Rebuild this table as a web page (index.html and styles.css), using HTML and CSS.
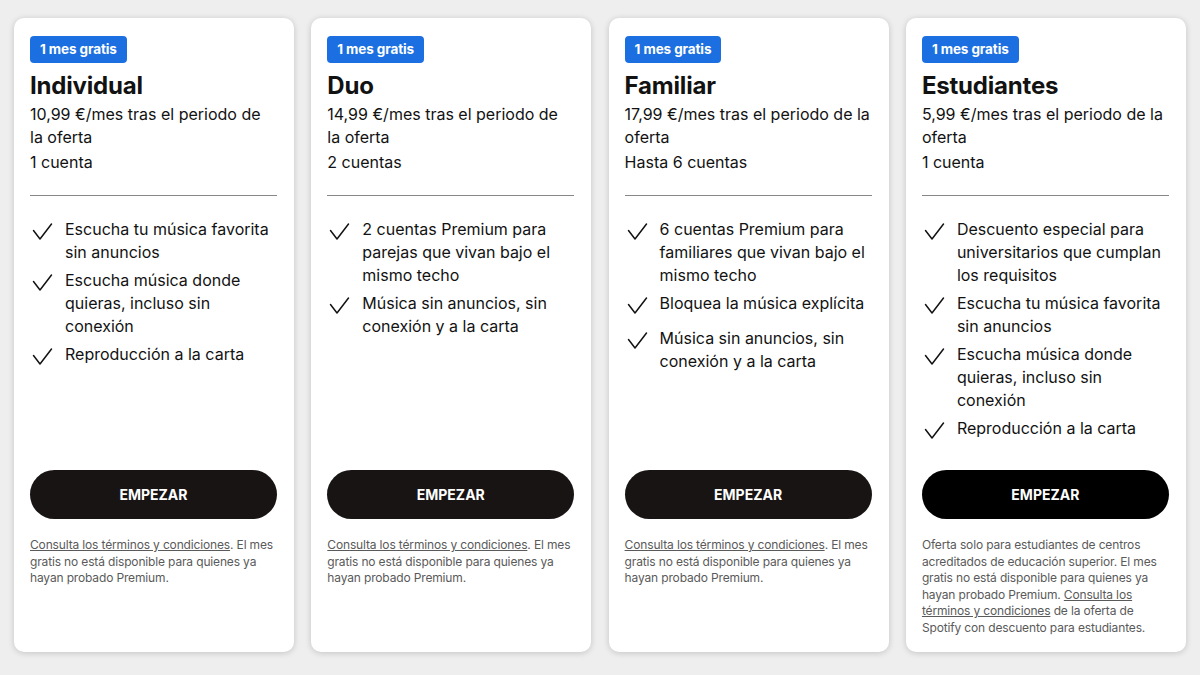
FILE: index.html
```html
<!DOCTYPE html>
<html lang="es">
<head>
<meta charset="utf-8">
<title>Planes Premium</title>
<link rel="stylesheet" href="styles.css">
</head>
<body>
<main class="plans">
  <section class="card">
    <span class="badge">1 mes gratis</span>
    <h2 class="title">Individual</h2>
    <p class="price">10,99 €/mes tras el periodo de la oferta</p>
    <p class="accounts">1 cuenta</p>
    <hr class="divider">
    <ul class="features">
      <li class="feature"><svg class="check" viewBox="0 0 24 24"><path d="M3.5 12.5 L10 21 L21.5 6"/></svg><span>Escucha tu música favorita sin anuncios</span></li>
      <li class="feature"><svg class="check" viewBox="0 0 24 24"><path d="M3.5 12.5 L10 21 L21.5 6"/></svg><span>Escucha música donde quieras, incluso sin conexión</span></li>
      <li class="feature"><svg class="check" viewBox="0 0 24 24"><path d="M3.5 12.5 L10 21 L21.5 6"/></svg><span>Reproducción a la carta</span></li>
    </ul>
    <button class="cta">EMPEZAR</button>
    <p class="fine"><a class="link" href="#">Consulta los términos y condiciones</a>. El mes gratis no está disponible para quienes ya hayan probado Premium.</p>
  </section>

  <section class="card">
    <span class="badge">1 mes gratis</span>
    <h2 class="title">Duo</h2>
    <p class="price">14,99 €/mes tras el periodo de la oferta</p>
    <p class="accounts">2 cuentas</p>
    <hr class="divider">
    <ul class="features">
      <li class="feature"><svg class="check" viewBox="0 0 24 24"><path d="M3.5 12.5 L10 21 L21.5 6"/></svg><span>2 cuentas Premium para parejas que vivan bajo el mismo techo</span></li>
      <li class="feature"><svg class="check" viewBox="0 0 24 24"><path d="M3.5 12.5 L10 21 L21.5 6"/></svg><span>Música sin anuncios, sin conexión y a la carta</span></li>
    </ul>
    <button class="cta">EMPEZAR</button>
    <p class="fine"><a class="link" href="#">Consulta los términos y condiciones</a>. El mes gratis no está disponible para quienes ya hayan probado Premium.</p>
  </section>

  <section class="card">
    <span class="badge">1 mes gratis</span>
    <h2 class="title">Familiar</h2>
    <p class="price">17,99 €/mes tras el periodo de la oferta</p>
    <p class="accounts">Hasta 6 cuentas</p>
    <hr class="divider">
    <ul class="features">
      <li class="feature"><svg class="check" viewBox="0 0 24 24"><path d="M3.5 12.5 L10 21 L21.5 6"/></svg><span>6 cuentas Premium para familiares que vivan bajo el mismo techo</span></li>
      <li class="feature"><svg class="check" viewBox="0 0 24 24"><path d="M3.5 12.5 L10 21 L21.5 6"/></svg><span>Bloquea la música explícita</span></li>
      <li class="feature"><svg class="check" viewBox="0 0 24 24"><path d="M3.5 12.5 L10 21 L21.5 6"/></svg><span>Música sin anuncios, sin conexión y a la carta</span></li>
    </ul>
    <button class="cta">EMPEZAR</button>
    <p class="fine"><a class="link" href="#">Consulta los términos y condiciones</a>. El mes gratis no está disponible para quienes ya hayan probado Premium.</p>
  </section>

  <section class="card">
    <span class="badge">1 mes gratis</span>
    <h2 class="title">Estudiantes</h2>
    <p class="price">5,99 €/mes tras el periodo de la oferta</p>
    <p class="accounts">1 cuenta</p>
    <hr class="divider">
    <ul class="features">
      <li class="feature"><svg class="check" viewBox="0 0 24 24"><path d="M3.5 12.5 L10 21 L21.5 6"/></svg><span>Descuento especial para universitarios que cumplan los requisitos</span></li>
      <li class="feature"><svg class="check" viewBox="0 0 24 24"><path d="M3.5 12.5 L10 21 L21.5 6"/></svg><span>Escucha tu música favorita sin anuncios</span></li>
      <li class="feature"><svg class="check" viewBox="0 0 24 24"><path d="M3.5 12.5 L10 21 L21.5 6"/></svg><span>Escucha música donde quieras, incluso sin conexión</span></li>
      <li class="feature"><svg class="check" viewBox="0 0 24 24"><path d="M3.5 12.5 L10 21 L21.5 6"/></svg><span>Reproducción a la carta</span></li>
    </ul>
    <button class="cta cta-black">EMPEZAR</button>
    <p class="fine">Oferta solo para estudiantes de centros acreditados de educación superior. El mes gratis no está disponible para quienes ya hayan probado Premium. <a class="link" href="#">Consulta los términos y condiciones</a> de la oferta de Spotify con descuento para estudiantes.</p>
  </section>
</main>
</body>
</html>
```

FILE: styles.css
```css
* { box-sizing: border-box; }

html, body {
  margin: 0;
  padding: 0;
  background: #eeeeee;
  width: 1200px;
  height: 675px;
  overflow: hidden;
}

body {
  font-family: "Inter", "Noto Sans", sans-serif;
  color: #121212;
}

.plans {
  display: grid;
  grid-template-columns: repeat(4, 280px);
  column-gap: 17.3px;
  padding: 18px 14px 0 14px;
  height: 652px;
}

.card {
  background: #ffffff;
  border-radius: 10px;
  box-shadow: 0 1px 6px rgba(0, 0, 0, 0.18);
  padding: 18px 17px 16px 16px;
  display: flex;
  flex-direction: column;
  align-items: flex-start;
}

.badge {
  display: inline-block;
  background: #1b6fe0;
  color: #ffffff;
  font-weight: 700;
  font-size: 13.5px;
  line-height: 27px;
  height: 27px;
  padding: 0 10px;
  border-radius: 4px;
  letter-spacing: -0.1px;
}

.title {
  margin: 8px 0 0 0;
  font-size: 24px;
  line-height: 30px;
  font-weight: 700;
  letter-spacing: -0.2px;
}

.price,
.accounts {
  margin: 2px 0 0 0;
  font-size: 16px;
  line-height: 23px;
}

.divider {
  width: 100%;
  border: 0;
  border-top: 1px solid #878787;
  margin: 21px 0 0 0;
}

.features {
  list-style: none;
  margin: 22px 0 0 0;
  padding: 0;
  flex: 1;
  display: flex;
  flex-direction: column;
  gap: 5px;
  width: 100%;
}

.feature {
  display: flex;
  align-items: flex-start;
  gap: 11px;
  min-height: 30px;
  font-size: 16px;
  line-height: 23px;
}

.check {
  flex: none;
  width: 24px;
  height: 24px;
}

.check path {
  fill: none;
  stroke: #121212;
  stroke-width: 1.5;
  stroke-linecap: round;
  stroke-linejoin: round;
}

.cta {
  width: 100%;
  height: 49px;
  border: 0;
  border-radius: 25px;
  background: #181414;
  color: #ffffff;
  font-family: inherit;
  font-weight: 700;
  font-size: 14px;
  cursor: pointer;
}

.cta-black {
  background: #000000;
}

.fine {
  margin: 18px 0 0 0;
  min-height: 99px;
  font-size: 12px;
  line-height: 16.5px;
  letter-spacing: -0.15px;
  color: #5a5a5a;
}

.link {
  color: #5a5a5a;
  text-decoration: underline;
}
```
